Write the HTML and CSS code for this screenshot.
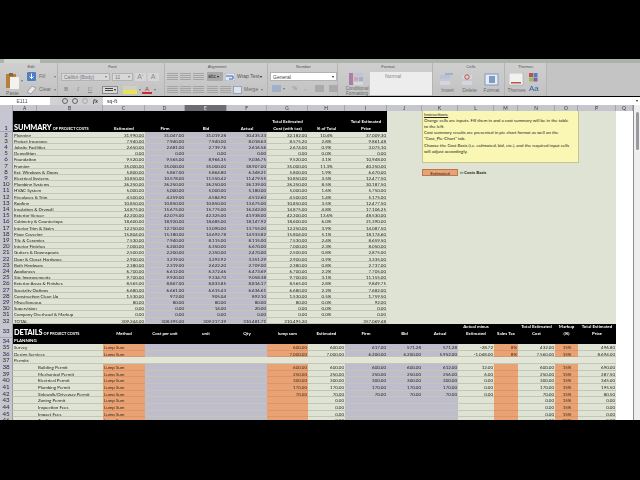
FILE: index.html
```html
<!DOCTYPE html>
<html lang="en">
<head>
<meta charset="utf-8">
<title>Project Costs</title>
<link rel="stylesheet" href="styles.css">
</head>
<body>
<div class="app">
  <div class="tabs"><div class="tab"></div></div>
  <div class="ribbon">
    <section class="grp g-edit">
      <h4>Edit</h4>
      <div class="body edit-body">
        <div class="paste">
          <svg width="13" height="16" viewBox="0 0 13 16"><rect x="0" y="1" width="10" height="14" fill="#b5803a"/><rect x="3" y="0" width="4" height="3" fill="#7d6a45"/><rect x="4" y="4" width="9" height="12" fill="#f2f2ee"/></svg>
          <span>Paste</span>
        </div>
        <i class="arrow a-paste"></i>
        <div class="col">
          <div class="tool"><svg width="9" height="9" viewBox="0 0 9 9"><rect width="9" height="9" rx="1" fill="#4f7fc4"/><path d="M4.5 1.5v5M2.5 4.5l2 2 2-2" stroke="#fff" fill="none"/></svg><span class="fill-l">Fill</span><i class="arrow"></i></div>
          <div class="tool"><svg width="9" height="8" viewBox="0 0 9 8"><path d="M0 6l5-6 4 2-5 6z" fill="#e8e8ee" stroke="#77777f" stroke-width=".6"/></svg><span class="clear-l">Clear</span><i class="arrow"></i></div>
        </div>
      </div>
    </section>
    <section class="grp g-font">
      <h4>Font</h4>
      <div class="body">
        <div class="col">
          <div class="tool">
            <div class="combo c-font">Calibri (Body)<i class="arrow"></i></div>
            <div class="combo c-size">11<i class="arrow"></i></div>
            <span class="aa">A<sup>+</sup></span><span class="aa">A<sup>-</sup></span>
          </div>
          <div class="tool">
            <span class="st b">B</span><span class="st it">I</span><span class="st u">U</span>
            <span class="border-btn"><i></i><i class="arrow dark"></i></span>
            <span class="ico-fill"></span><i class="arrow"></i>
            <span class="ico-a">A</span><i class="arrow"></i>
          </div>
        </div>
      </div>
    </section>
    <section class="grp g-align">
      <h4>Alignment</h4>
      <div class="body">
        <div class="col">
          <div class="tool">
            <span class="lines"></span><span class="lines"></span><span class="lines"></span>
            <span class="abc">abc<i class="arrow dark"></i></span>
            <svg width="10" height="8" viewBox="0 0 10 8"><rect width="10" height="8" fill="#e3e7ee" stroke="#7e93b5" stroke-width=".7"/><path d="M1 3h7v3H4" stroke="#3d68ad" fill="none"/></svg>
            <span class="wrap-l">Wrap Text</span><i class="arrow dark"></i>
          </div>
          <div class="tool">
            <span class="lines"></span><span class="lines"></span><span class="lines"></span>
            <span class="lines ind"></span><span class="lines"></span>
            <svg width="9" height="8" viewBox="0 0 9 8"><rect x=".5" y=".5" width="8" height="7" fill="#dfe4ec" stroke="#7e93b5" stroke-width=".7"/></svg>
            <span class="merge-l">Merge</span><i class="arrow"></i>
          </div>
        </div>
      </div>
    </section>
    <section class="grp g-num">
      <h4>Number</h4>
      <div class="body">
        <div class="col col-num">
          <div class="combo c-gen">General<i class="arrow dark"></i></div>
          <div class="tool">
            <span class="sw"></span><i class="arrow"></i><span class="st pct">%</span><span class="st">,</span><span class="sw small"></span><span class="sw small"></span>
          </div>
        </div>
      </div>
    </section>
    <section class="grp g-style">
      <h4>Format</h4>
      <div class="body style-body">
        <div class="cond">
          <svg width="16" height="12" viewBox="0 0 16 12"><rect x="0" y="0" width="4" height="12" fill="#a77fa8"/><rect x="5" y="4" width="4" height="4" fill="#d8a0b0"/><rect x="5" y="0" width="9" height="3" fill="#bcc6d8"/><rect x="10" y="4" width="4" height="4" fill="#9fb0cc"/><rect x="5" y="9" width="9" height="3" fill="#d5d8de"/></svg>
          <span>Conditional<br>Formatting</span>
        </div>
        <div class="normal">Normal</div>
      </div>
    </section>
    <section class="grp g-cells">
      <h4>Cells</h4>
      <div class="body cells-body">
        <div class="cell-btn"><svg width="16" height="13" viewBox="0 0 16 13"><rect y="2" width="10" height="4" fill="#b7c4d8"/><rect y="8" width="10" height="4" fill="#d2d6de"/><rect x="5" y="0" width="8" height="2" fill="#9fb1cf"/></svg><span>Insert</span></div>
        <div class="cell-btn"><svg width="16" height="13" viewBox="0 0 16 13"><rect y="2" width="10" height="4" fill="#d2d6de"/><rect y="8" width="10" height="4" fill="#d2d6de"/><circle cx="5" cy="4" r="2.2" fill="none" stroke="#c7553f"/></svg><span>Delete</span></div>
        <div class="cell-btn"><svg width="16" height="13" viewBox="0 0 16 13"><rect x="1" y="1" width="13" height="11" fill="#e7ebf2" stroke="#7f9ac4"/><rect x="5" y="3" width="6" height="7" fill="#7f9ac4"/></svg><span>Format</span></div>
      </div>
    </section>
    <section class="grp g-theme">
      <h4>Themes</h4>
      <div class="body theme-body">
        <div class="cell-btn"><svg width="15" height="13" viewBox="0 0 15 13"><rect width="14" height="12" fill="#f1f1ee" stroke="#9a9a9a" stroke-width=".5"/><rect x="2" y="9" width="10" height="1.5" fill="#c0504d"/></svg><span>Themes</span></div>
        <div class="theme-side">
          <svg width="11" height="9" viewBox="0 0 11 9"><rect width="4" height="4" fill="#c0504d"/><rect x="4.5" width="4" height="4" fill="#4f81bd"/><rect y="4.5" width="4" height="4" fill="#9bbb59"/><rect x="4.5" y="4.5" width="4" height="4" fill="#8064a2"/></svg>
          <span class="theme-aa">Aa</span>
        </div>
      </div>
    </section>
    <div class="grp-rest"></div>
  </div>

  <div class="fbar">
    <div class="namebox">E111</div>
    <div class="stepper"></div>
    <div class="ficons"><span class="rnd"></span><span class="rnd"></span><span class="rnd pale-r"></span><span class="fx">fx</span></div>
    <div class="finput">sq-ft</div>
    <i class="arrow dark"></i>
  </div>

  <div class="workarea">
    <div class="sheet">
      <div class="colhead">
        <span></span><span>A</span><span>B</span><span>C</span><span>D</span><span class="sel">E</span><span>F</span><span>G</span><span>H</span><span>I</span><span>J</span><span>K</span><span>L</span><span>M</span><span>N</span><span>O</span><span>P</span><span>Q</span>
      </div>

      <div class="summary">
        <div class="sumtable">
          <div class="srow head">
            <span class="rh">1</span>
            <span class="title"><b>SUMMARY</b> <small>OF PROJECT COSTS</small></span>
            <span>Estimated</span><span>Firm</span><span>Bid</span><span>Actual</span>
            <span>Total Estimated<br>Cost (with tax)</span><span>% of Total</span><span>Total Estimated<br>Price</span>
          </div>
          <div class="srow"><span class="rh">2</span><span class="t">Planning</span><span class="n">31,990.00</span><span class="n p">31,047.00</span><span class="n p">31,019.28</span><span class="n p">30,435.33</span><span class="n">32,182.00</span><span class="c">10.4%</span><span class="n">37,009.30</span></div>
          <div class="srow"><span class="rh">3</span><span class="t">Project Insurance</span><span class="n">7,940.00</span><span class="n p">7,940.00</span><span class="n p">7,940.00</span><span class="n p">8,018.63</span><span class="n">8,575.20</span><span class="c">2.8%</span><span class="n">9,861.48</span></div>
          <div class="srow"><span class="rh">4</span><span class="t">Jobsite Facilities</span><span class="n">2,650.00</span><span class="n p">2,681.00</span><span class="n p">2,739.76</span><span class="n p">2,616.56</span><span class="n">2,674.00</span><span class="c">0.9%</span><span class="n">3,075.10</span></div>
          <div class="srow"><span class="rh">5</span><span class="t">Demolition</span><span class="n">0.00</span><span class="n p">0.00</span><span class="n p">0.00</span><span class="n p">0.00</span><span class="n">0.00</span><span class="c">0.0%</span><span class="n">0.00</span></div>
          <div class="srow"><span class="rh">6</span><span class="t">Foundation</span><span class="n">9,520.00</span><span class="n p">9,565.00</span><span class="n p">8,966.35</span><span class="n p">9,036.75</span><span class="n">9,520.00</span><span class="c">3.1%</span><span class="n">10,948.00</span></div>
          <div class="srow"><span class="rh">7</span><span class="t">Framing</span><span class="n">35,000.00</span><span class="n p">35,000.00</span><span class="n p">35,000.00</span><span class="n p">38,907.00</span><span class="n">35,000.00</span><span class="c">11.3%</span><span class="n">40,250.00</span></div>
          <div class="srow"><span class="rh">8</span><span class="t">Ext. Windows &amp; Doors</span><span class="n">5,800.00</span><span class="n p">5,867.00</span><span class="n p">5,864.80</span><span class="n p">6,348.21</span><span class="n">5,800.00</span><span class="c">1.9%</span><span class="n">6,670.00</span></div>
          <div class="srow"><span class="rh">9</span><span class="t">Electrical Systems</span><span class="n">10,850.00</span><span class="n p">10,578.00</span><span class="n p">11,550.42</span><span class="n p">11,479.55</span><span class="n">10,850.00</span><span class="c">3.5%</span><span class="n">12,477.50</span></div>
          <div class="srow"><span class="rh">10</span><span class="t">Plumbing Systems</span><span class="n">26,250.00</span><span class="n p">26,250.00</span><span class="n p">26,250.00</span><span class="n p">26,139.00</span><span class="n">26,250.00</span><span class="c">8.5%</span><span class="n">30,187.50</span></div>
          <div class="srow"><span class="rh">11</span><span class="t">HVAC System</span><span class="n">5,000.00</span><span class="n p">5,000.00</span><span class="n p">5,000.00</span><span class="n p">5,180.00</span><span class="n">5,000.00</span><span class="c">1.6%</span><span class="n">5,750.00</span></div>
          <div class="srow"><span class="rh">12</span><span class="t">Fireplaces &amp; Trim</span><span class="n">4,500.00</span><span class="n p">4,259.00</span><span class="n p">4,584.90</span><span class="n p">4,512.60</span><span class="n">4,500.00</span><span class="c">1.4%</span><span class="n">5,175.00</span></div>
          <div class="srow"><span class="rh">13</span><span class="t">Roofing</span><span class="n">10,850.00</span><span class="n p">10,850.00</span><span class="n p">10,850.00</span><span class="n p">13,675.00</span><span class="n">10,850.00</span><span class="c">3.5%</span><span class="n">12,477.50</span></div>
          <div class="srow"><span class="rh">14</span><span class="t">Insulation &amp; Drywall</span><span class="n">14,875.00</span><span class="n p">15,675.00</span><span class="n p">15,775.00</span><span class="n p">16,242.00</span><span class="n">14,875.00</span><span class="c">4.8%</span><span class="n">17,106.25</span></div>
          <div class="srow"><span class="rh">15</span><span class="t">Exterior Veneer</span><span class="n">42,200.00</span><span class="n p">42,075.00</span><span class="n p">42,325.00</span><span class="n p">43,938.00</span><span class="n">42,200.00</span><span class="c">13.6%</span><span class="n">48,530.00</span></div>
          <div class="srow"><span class="rh">16</span><span class="t">Cabinetry &amp; Countertops</span><span class="n">18,600.00</span><span class="n p">18,920.00</span><span class="n p">18,685.00</span><span class="n p">18,147.92</span><span class="n">18,600.00</span><span class="c">6.0%</span><span class="n">21,390.00</span></div>
          <div class="srow"><span class="rh">17</span><span class="t">Interior Trim &amp; Stairs</span><span class="n">12,250.00</span><span class="n p">12,700.00</span><span class="n p">13,090.00</span><span class="n p">13,755.00</span><span class="n">12,250.00</span><span class="c">3.9%</span><span class="n">14,087.50</span></div>
          <div class="srow"><span class="rh">18</span><span class="t">Floor Covering</span><span class="n">15,804.00</span><span class="n p">15,180.00</span><span class="n p">14,692.78</span><span class="n p">14,933.82</span><span class="n">15,804.00</span><span class="c">5.1%</span><span class="n">18,174.60</span></div>
          <div class="srow"><span class="rh">19</span><span class="t">Tile &amp; Ceramics</span><span class="n">7,530.00</span><span class="n p">7,940.00</span><span class="n p">8,115.00</span><span class="n p">8,115.00</span><span class="n">7,530.00</span><span class="c">2.4%</span><span class="n">8,659.50</span></div>
          <div class="srow"><span class="rh">20</span><span class="t">Interior Finishes</span><span class="n">7,000.00</span><span class="n p">6,200.00</span><span class="n p">6,350.00</span><span class="n p">6,670.00</span><span class="n">7,000.00</span><span class="c">2.3%</span><span class="n">8,050.00</span></div>
          <div class="srow"><span class="rh">21</span><span class="t">Gutters &amp; Downspouts</span><span class="n">2,500.00</span><span class="n p">2,200.00</span><span class="n p">2,350.00</span><span class="n p">2,470.00</span><span class="n">2,500.00</span><span class="c">0.8%</span><span class="n">2,875.00</span></div>
          <div class="srow"><span class="rh">22</span><span class="t">Door &amp; Closet Hardware</span><span class="n">2,900.00</span><span class="n p">3,219.00</span><span class="n p">3,292.92</span><span class="n p">3,351.29</span><span class="n">2,900.00</span><span class="c">0.9%</span><span class="n">3,335.00</span></div>
          <div class="srow"><span class="rh">23</span><span class="t">Bath Hardware</span><span class="n">2,380.00</span><span class="n p">2,319.00</span><span class="n p">2,622.20</span><span class="n p">2,709.00</span><span class="n">2,380.00</span><span class="c">0.8%</span><span class="n">2,737.00</span></div>
          <div class="srow"><span class="rh">24</span><span class="t">Appliances</span><span class="n">6,700.00</span><span class="n p">6,612.00</span><span class="n p">6,372.46</span><span class="n p">6,473.69</span><span class="n">6,700.00</span><span class="c">2.2%</span><span class="n">7,705.00</span></div>
          <div class="srow"><span class="rh">25</span><span class="t">Site Improvements</span><span class="n">9,700.00</span><span class="n p">9,920.00</span><span class="n p">9,334.70</span><span class="n p">9,058.38</span><span class="n">9,700.00</span><span class="c">3.1%</span><span class="n">11,155.00</span></div>
          <div class="srow"><span class="rh">26</span><span class="t">Exterior Areas &amp; Finishes</span><span class="n">8,565.00</span><span class="n p">8,867.00</span><span class="n p">8,833.85</span><span class="n p">8,816.17</span><span class="n">8,565.00</span><span class="c">2.8%</span><span class="n">9,849.75</span></div>
          <div class="srow"><span class="rh">27</span><span class="t">Specialty Options</span><span class="n">6,680.00</span><span class="n p">6,661.00</span><span class="n p">6,615.43</span><span class="n p">6,636.61</span><span class="n">6,680.00</span><span class="c">2.2%</span><span class="n">7,682.00</span></div>
          <div class="srow"><span class="rh">28</span><span class="t">Construction Clean Up</span><span class="n">1,530.00</span><span class="n p">972.00</span><span class="n p">905.04</span><span class="n p">892.10</span><span class="n">1,530.00</span><span class="c">0.5%</span><span class="n">1,759.50</span></div>
          <div class="srow"><span class="rh">29</span><span class="t">Miscellaneous</span><span class="n">80.00</span><span class="n p">80.00</span><span class="n p">80.00</span><span class="n p">80.00</span><span class="n">80.00</span><span class="c">0.0%</span><span class="n">92.00</span></div>
          <div class="srow"><span class="rh">30</span><span class="t">Supervision</span><span class="n">0.00</span><span class="n p">0.00</span><span class="n p">14.00</span><span class="n p">20.00</span><span class="n">0.00</span><span class="c">0.0%</span><span class="n">0.00</span></div>
          <div class="srow"><span class="rh">31</span><span class="t">Company Overhead &amp; Markup</span><span class="n">0.00</span><span class="n p">0.00</span><span class="n p">0.00</span><span class="n p">0.00</span><span class="n">0.00</span><span class="c">0.0%</span><span class="n">0.00</span></div>
          <div class="srow"><span class="rh">32</span><span class="t">TOTAL</span><span class="n">309,244.00</span><span class="n p">308,395.00</span><span class="n p">309,217.39</span><span class="n p">310,481.71</span><span class="n">310,495.20</span><span class="c"></span><span class="n">357,069.48</span></div>
        </div>
        <div class="notes">
          <div class="instructions">
            <u>Instructions:</u><br>
            Orange cells are inputs. Fill them in and a cost summary will be in the table<br>
            to the left.<br>
            Cost summary results are presented in pie chart format as well on the<br>
            "Cost_Pie-Chart" tab.<br>
            Choose the Cost Basis (i.e. estimated, bid, etc.), and the required input cells<br>
            will adjust accordingly.
          </div>
          <div class="basis"><span class="basis-cell">Estimated</span><span class="basis-label">⇦ Costs Basis</span></div>
        </div>
      </div>

      <div class="drow dhead">
        <span class="rh">33</span>
        <span class="title s2"><b>DETAILS</b> <small>OF PROJECT COSTS</small></span>
        <span>Method</span><span>Cost per unit</span><span>unit</span><span>Qty</span><span>lump sum</span><span>Estimated</span><span>Firm</span><span>Bid</span><span>Actual</span><span>Actual minus<br>Estimated</span><span>Sales Tax</span><span>Total Estimated<br>Cost</span><span>Markup<br>(%)</span><span>Total Estimated<br>Price</span>
      </div>
      <div class="drow dsub"><span class="rh">34</span><span class="s2 plan">PLANNING</span></div>
      <div class="drow"><span class="rh">35</span><span class="t s2">Survey</span><span class="o">Lump Sum</span><span class="p s3"></span><span class="n o">600.00</span><span class="n">600.00</span><span class="n p">617.00</span><span class="n p">571.28</span><span class="n p">571.28</span><span class="n">-28.72</span><span class="n o">8%</span><span class="n">432.00</span><span class="c o">15%</span><span class="n">496.80</span></div>
      <div class="drow"><span class="rh">36</span><span class="t s2">Design Services</span><span class="o">Lump Sum</span><span class="p s3"></span><span class="n o">7,000.00</span><span class="n">7,000.00</span><span class="n p">6,200.00</span><span class="n p">6,200.00</span><span class="n p">5,952.00</span><span class="n">-1,048.00</span><span class="n o">8%</span><span class="n">7,560.00</span><span class="c o">15%</span><span class="n">8,694.00</span></div>
      <div class="drow"><span class="rh">37</span><span class="t s2">Permits</span><span class="s14 pale"></span></div>
      <div class="drow"><span class="rh">38</span><span></span><span class="t">Building Permit</span><span class="o">Lump Sum</span><span class="p s3"></span><span class="n o">600.00</span><span class="n">600.00</span><span class="n p">600.00</span><span class="n p">600.00</span><span class="n p">612.00</span><span class="n">12.00</span><span class="o"></span><span class="n">600.00</span><span class="c o">15%</span><span class="n">690.00</span></div>
      <div class="drow"><span class="rh">39</span><span></span><span class="t">Mechanical Permit</span><span class="o">Lump Sum</span><span class="p s3"></span><span class="n o">250.00</span><span class="n">250.00</span><span class="n p">250.00</span><span class="n p">250.00</span><span class="n p">256.00</span><span class="n">6.00</span><span class="o"></span><span class="n">250.00</span><span class="c o">15%</span><span class="n">287.50</span></div>
      <div class="drow"><span class="rh">40</span><span></span><span class="t">Electrical Permit</span><span class="o">Lump Sum</span><span class="p s3"></span><span class="n o">300.00</span><span class="n">300.00</span><span class="n p">300.00</span><span class="n p">300.00</span><span class="n p">300.00</span><span class="n">0.00</span><span class="o"></span><span class="n">300.00</span><span class="c o">15%</span><span class="n">345.00</span></div>
      <div class="drow"><span class="rh">41</span><span></span><span class="t">Plumbing Permit</span><span class="o">Lump Sum</span><span class="p s3"></span><span class="n o">170.00</span><span class="n">170.00</span><span class="n p">170.00</span><span class="n p">170.00</span><span class="n p">170.00</span><span class="n">0.00</span><span class="o"></span><span class="n">170.00</span><span class="c o">15%</span><span class="n">195.50</span></div>
      <div class="drow"><span class="rh">42</span><span></span><span class="t">Sidewalk/Driveway Permit</span><span class="o">Lump Sum</span><span class="p s3"></span><span class="n o">70.00</span><span class="n">70.00</span><span class="n p">70.00</span><span class="n p">70.00</span><span class="n p">70.00</span><span class="n">0.00</span><span class="o"></span><span class="n">70.00</span><span class="c o">15%</span><span class="n">80.50</span></div>
      <div class="drow"><span class="rh">43</span><span></span><span class="t">Zoning Permit</span><span class="o">Lump Sum</span><span class="p s3"></span><span class="n o"></span><span class="n">0.00</span><span class="n p"></span><span class="n p"></span><span class="n p"></span><span class="n"></span><span class="o"></span><span class="n">0.00</span><span class="c o">15%</span><span class="n">0.00</span></div>
      <div class="drow"><span class="rh">44</span><span></span><span class="t">Inspection Fees</span><span class="o">Lump Sum</span><span class="p s3"></span><span class="n o"></span><span class="n">0.00</span><span class="n p"></span><span class="n p"></span><span class="n p"></span><span class="n"></span><span class="o"></span><span class="n">0.00</span><span class="c o">15%</span><span class="n">0.00</span></div>
      <div class="drow"><span class="rh">45</span><span></span><span class="t">Impact Fees</span><span class="o">Lump Sum</span><span class="p s3"></span><span class="n o"></span><span class="n">0.00</span><span class="n p"></span><span class="n p"></span><span class="n p"></span><span class="n"></span><span class="o"></span><span class="n">0.00</span><span class="c o">15%</span><span class="n">0.00</span></div>
      <div class="drow"><span class="rh">46</span><span></span><span class="t">Tap Fees</span><span class="o">Lump Sum</span><span class="p s3"></span><span class="n o"></span><span class="n">0.00</span><span class="n p"></span><span class="n p"></span><span class="n p"></span><span class="n"></span><span class="o"></span><span class="n">0.00</span><span class="c o">15%</span><span class="n">0.00</span></div>
    </div>
    <div class="vscroll"><div class="thumb"></div></div>
  </div>
</div>
</body>
</html>
```
FILE: styles.css
```css
* { box-sizing: border-box; }
html, body { margin: 0; height: 100%; background: #000; overflow: hidden; }
body { font-family: Lato, "Liberation Sans", sans-serif; }
h4 { margin: 0; font-weight: normal; }

.app {
  width: 640px; height: 420px; padding-top: 59px;
  display: flex; flex-direction: column; filter: blur(.35px); overflow: hidden;
}

/* tab strip */
.tabs { height: 4px; background: #a9b5a6; flex: none; padding-left: 4px; }
.tab { width: 36px; height: 4px; background: #cfd8cc; }

/* ribbon */
.ribbon { height: 33px; flex: none; display: flex; background: linear-gradient(#cfcfcf, #c2c2c2); color: #6c6c6c; font-size: 5px; line-height: 5px; font-family: "Liberation Sans", sans-serif; }
.grp { flex: none; display: flex; flex-direction: column; border-right: 1px solid #b4b4b4; }
.grp h4 { height: 7px; padding-top: 1px; line-height: 6px; font-size: 4.2px; text-align: center; color: #555; }
.grp .body { flex: 1; display: flex; }
.g-edit { width: 58px; padding-left: 5px; }
.g-font { width: 107px; padding-left: 3px; }
.g-align { width: 103px; padding-left: 2px; }
.g-num { width: 70px; padding-left: 2px; }
.g-style { width: 95px; padding-left: 6px; }
.g-cells { width: 72px; padding-left: 5px; }
.g-theme { width: 42px; }
.grp-rest { flex: 1; background: #c4c4c4; }

.col { display: flex; flex-direction: column; gap: 4px; padding-top: 2px; }
.tool { display: flex; align-items: center; gap: 2px; height: 9px; }

.arrow { display: inline-block; width: 0; height: 0; flex: none; border: 1.5px solid transparent; border-top: 2px solid #777; border-bottom: 0; }
.arrow.dark { border-top-color: #222; }

.edit-body { gap: 1px; }
.paste { width: 15px; display: flex; flex-direction: column; align-items: center; gap: 2px; padding-top: 3px; }
.a-paste { margin: 10px 3px 0 0; }
.fill-l { width: 13px; margin-left: 1px; }
.clear-l { width: 13px; margin-left: 1px; }

.combo { height: 8px; line-height: 8px; background: #d8d8da; border: .5px solid #b2b2b2; padding-left: 2px; display: flex; align-items: center; justify-content: space-between; color: #777; }
.combo .arrow { margin-right: 2px; }
.c-font { width: 49px; }
.c-size { width: 21px; }
.aa { width: 11px; font-size: 7px; text-align: center; background: #d6d6d6; line-height: 8px; color: #8a8a8a; }
.aa sup { font-size: 3px; line-height: 0; }
.st { width: 10px; text-align: center; font-family: "Liberation Serif", serif; font-size: 6px; color: #888; }
.st.b { font-weight: bold; }
.st.it { font-style: italic; }
.st.u { text-decoration: underline; margin-right: 5px; }
.st.pct { margin-left: 3px; }
.border-btn { width: 16px; height: 8px; background: #d8d8d8; border: .5px solid #8c8c8c; display: flex; align-items: center; gap: 1px; padding-left: 2px; }
.border-btn i:first-child { width: 8px; height: 3px; border: solid #444; border-width: 1px 0; }
.ico-fill { width: 14px; height: 8px; margin-left: 3px; background: linear-gradient(#d0cfc0 50%, #e8e35a 50%); }
.ico-a { width: 10px; height: 8px; line-height: 6px; margin-left: -1px; text-align: center; font-size: 6px; color: #a34; border-bottom: 2px solid #c62f2f; }

.lines { width: 11px; height: 7px; flex: none; background: repeating-linear-gradient(#a4a4a4 0 1px, transparent 1px 2px); }
.lines.ind { margin-left: 1px; }
.abc { width: 16px; height: 9px; line-height: 9px; background: #a9a9a9; color: #333; display: flex; align-items: center; gap: 1px; margin-left: 1px; padding-left: 1px; flex: none; }
.wrap-l { width: 21px; flex: none; color: #555; white-space: nowrap; }
.merge-l { width: 15px; flex: none; }
.tool svg { flex: none; }

.col-num { width: 68px; gap: 3px; }
.c-gen { width: 67px; height: 9px; background: #fff; color: #444; }
.sw { width: 9px; height: 7px; background: #9fb0c8; flex: none; }
.tool .sw:first-child { margin-left: 2px; }
.sw.small { background: #aaa; margin-left: 3px; }
.cond { width: 26px; flex: none; padding-top: 1px; display: flex; flex-direction: column; align-items: center; text-align: center; font-size: 4.6px; line-height: 5px; white-space: nowrap; }
.cond svg { margin-bottom: 1px; }

.style-body { padding-top: 2px; }
.normal { width: 62px; height: 23px; background: #ededed; padding: 2px 0 0 15px; color: #8a8a8a; }

.cells-body { gap: 3px; padding-top: 3px; }
.cell-btn { width: 19px; display: flex; flex-direction: column; align-items: center; gap: 2px; }
.theme-body { padding: 3px 0 0 2px; gap: 3px; }
.theme-side { display: flex; flex-direction: column; gap: 2px; }
.theme-aa { color: #2a62a8; font-size: 8px; line-height: 9px; }

/* formula bar */
.fbar { height: 8px; margin-top: 1px; flex: none; display: flex; align-items: center; background: #fff; font-family: "Liberation Sans", sans-serif; font-size: 5px; color: #333; }
.namebox { width: 50px; text-align: center; padding-right: 6px; color: #555; }
.stepper { width: 8px; height: 8px; background: #d2d2d2; }
.ficons { width: 45px; height: 8px; background: #d0d0d0; display: flex; align-items: center; gap: 4px; padding-left: 4px; }
.rnd { width: 6px; height: 6px; border-radius: 50%; border: 1.5px solid #666; }
.rnd.pale-r { border-color: #aaa; }
.fx { font-family: "Liberation Serif", serif; font-style: italic; font-weight: bold; font-size: 6px; margin-left: 1px; }
.finput { flex: 1; padding-left: 4px; font-size: 5.2px; }
.fbar .arrow { margin: 0 2px; }

/* work area */
.workarea { flex: 1; display: flex; min-height: 0; }
.sheet { width: 633px; background: #fff; overflow: hidden; font-size: 4.45px; line-height: 7px; color: #222; }
.vscroll { width: 7px; background: #eeeeee; border-left: 1px solid #8e8e92; padding: 7px 1px 0 2px; }
.thumb { height: 38px; width: 3px; border-radius: 2px; background: #9a9a9e; }

.colhead { height: 6px; line-height: 6px; display: grid; background: #c6c6cf; color: #333; font-size: 4.8px; text-align: center;
  grid-template-columns: 13px 24px 66px 42px 40px 42px 40px 41px 37px 42px 35px 36px 36px 24px 37px 23px 38px 17px; }
.colhead span { border-right: 1px solid #a5a5ae; }
.colhead .sel { background: #6d6d76; color: #eee; }

.summary { display: flex; height: 213px; }
.sumtable { width: 387px; flex: none; }
.srow { display: grid; height: 6.21px; grid-template-columns: 13px 90px 42px 40px 42px 40px 41px 37px 42px; background: #dfe3d3; }
.srow.head { height: 20.5px; background: #000; color: #fff; font-weight: bold; text-align: center; align-items: end; line-height: 7px; }

.drow { display: grid; width: 616px; height: 6.67px; grid-template-columns: 13px 24px 66px 42px 40px 42px 40px 41px 37px 42px 35px 36px 36px 24px 37px 23px 38px; background: #dfe3d3; }
.drow.dhead { height: 14px; background: #000; color: #fff; font-weight: bold; text-align: center; align-items: end; line-height: 6.4px; padding-bottom: 1px; }
.drow.dsub { height: 6px; line-height: 6px; background: #000; color: #fff; font-weight: bold; }

.srow > span, .drow > span { min-width: 0; white-space: nowrap; overflow: hidden; }
.srow:not(.head) > span, .drow:not(.dhead):not(.dsub) > span { border-bottom: 1px solid #c3c7b6; }

.rh { background: #c5c6d2; color: #2d2d3a; text-align: center; font-size: 6.2px; line-height: 6px; font-weight: normal; border-right: 1px solid #9a9aa6; }
.srow .rh, .drow .rh { border-bottom: 1px solid #a6a6b2; }
.head .rh { align-self: stretch; display: flex; align-items: flex-end; justify-content: center; }
.dhead .rh, .dsub .rh { align-self: stretch; display: flex; align-items: center; justify-content: center; margin-bottom: -1px; }

.t { padding-left: 1px; }
.n { text-align: right; padding-right: 1px; }
.c { text-align: center; }
.p { background: #bfbdcc; }
.drow .p { background: #bfbdcc; border-bottom-color: #aeacbc; }
.o { background: #e8a273; border-bottom-color: #dc9566 !important; padding-left: 1px; color: #3a2a20; }
.n.o { padding-left: 0; }
.s2 { grid-column: span 2; }
.s3 { grid-column: span 3; }
.s14 { grid-column: span 14; }
.pale { background: #e3e6d7; }
.srow > .title, .drow > .title { text-align: left; padding-left: 1px; color: #fff; overflow: visible; line-height: 7px; }
.title b { font-size: 7.4px; letter-spacing: -.1px; }
.title small { font-size: 3.9px; }
.plan { padding-left: 1px; font-size: 4.4px; }

.notes { width: 229px; flex: none; background: #dfe3d3; padding-left: 35px; }
.instructions { width: 157px; height: 52px; background: #faf6b4; border: 1px solid #c6c394; border-top: 0; padding: .5px 0 0 1px; line-height: 6.2px; white-space: nowrap; }
.basis { display: flex; margin-top: 6px; height: 7px; align-items: center; }
.basis-cell { width: 36px; height: 7px; background: #e8a273; text-align: center; line-height: 7px; border: .5px solid #b9784f; }
.basis-label { margin-left: 2px; font-weight: bold; }
```
